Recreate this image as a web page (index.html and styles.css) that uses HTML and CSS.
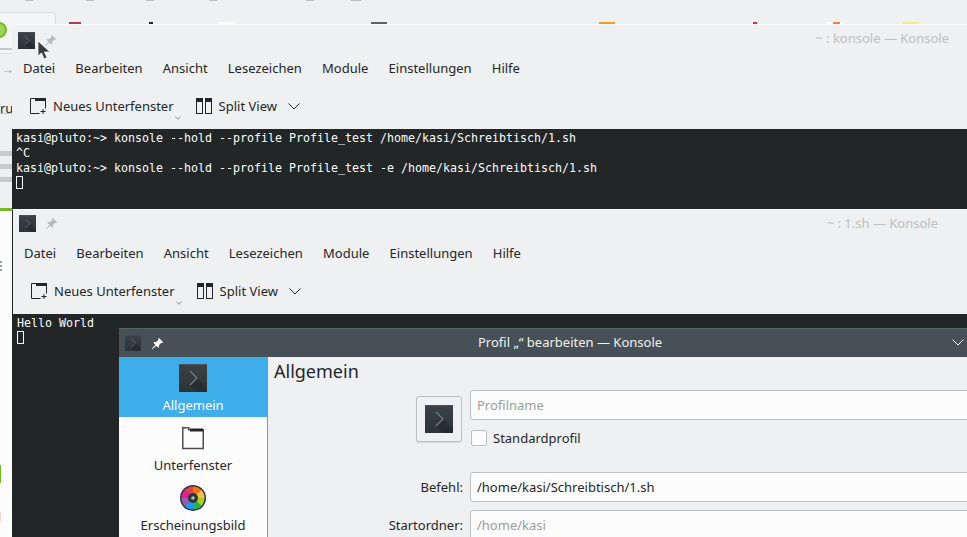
FILE: index.html
```html
<!DOCTYPE html>
<html lang="de">
<head>
    <meta charset="UTF-8">
    <meta name="viewport" content="width=device-width, initial-scale=1.0">
    <title>Konsole</title>
    <link rel="stylesheet" href="styles.css">
</head>
<body>
    <svg class="defs" width="0" height="0">
        <defs>
            <linearGradient id="konsole-bg" x1="0" y1="0" x2="0" y2="1">
                <stop offset="0" stop-color="#565c60"/>
                <stop offset="0.05" stop-color="#3b4144"/>
                <stop offset="1" stop-color="#2c3437"/>
            </linearGradient>
            <symbol id="konsole" viewBox="0 0 28 28">
                <rect width="28" height="28" fill="url(#konsole-bg)"/>
                <path d="M18 14l-7 7 7 7h10V24z" fill="#1f2426" opacity="0.45"/>
                <path d="M11 7l7 7-7 7" fill="none" stroke="#767c7f" stroke-width="1.200"/>
            </symbol>
            <symbol id="pin" viewBox="0 0 16 16">
                <path d="M9.500 1l5.500 5.500-1.500.8-.8-.3-3 3 .2 2.300-1 1-2.400-2.400L1.500 15l-.5-.5 4.400-5-2.400-2.400 1-1 2.300.2 3-3-.3-.8z" fill="currentColor"/>
            </symbol>
            <symbol id="new-tab" viewBox="0 0 16 16">
                <path d="M.5 15.500V.5h5v2h10v8" fill="none" stroke="#232629"/>
                <path d="M.5 15.500h9" fill="none" stroke="#232629"/>
                <rect x="5" y="0" width="11" height="3" fill="#232629"/>
                <path d="M13 11v5M10.500 13.500h5" fill="none" stroke="#232629"/>
            </symbol>
            <symbol id="split" viewBox="0 0 16 16">
                <rect x=".5" y=".5" width="6" height="15" fill="none" stroke="#232629"/>
                <rect x="9.500" y=".5" width="6" height="15" fill="none" stroke="#232629"/>
                <rect x="0" y="0" width="7" height="4" fill="#232629"/>
                <rect x="9" y="0" width="7" height="4" fill="#232629"/>
            </symbol>
            <symbol id="chevron" viewBox="0 0 12 7">
                <path d="M.5 .5L6 6l5.500-5.500" fill="none" stroke="currentColor"/>
            </symbol>
        </defs>
    </svg>

    <!-- whatever is left of the desktop behind the windows -->
    <div class="desktop">
        <div class="side-top">
            <span class="tick tick1"></span>
            <span class="tick tick2"></span>
            <span class="tick tick3"></span>
            <span class="tick tick4"></span>
            <span class="tick tick5"></span>
            <span class="tick tick6"></span>
            <div class="card"></div>
            <div class="green-dot"></div>
            <div class="side-rule rule1"></div>
            <div class="side-arrow">→</div>
            <div class="side-text">ru</div>
            <div class="side-rule rule2"></div>
        </div>
        <div class="stripe stripe1"></div>
        <div class="stripe stripe2"></div>
        <div class="stripe stripe3"></div>
        <div class="green-line"></div>
        <div class="side-dots"></div>
        <div class="green-bar"></div>
        <div class="pink-bar"></div>

        <span class="peek peek1"></span>
        <span class="peek peek2"></span>
        <span class="peek peek3"></span>
        <span class="peek peek4"></span>
        <span class="peek peek5"></span>
        <span class="peek peek6"></span>
        <span class="peek peek7"></span>
        <span class="peek peek8"></span>
    </div>

    <div class="window window-one">
        <div class="titlebar">
            <svg class="app-icon"><use href="#konsole"/></svg>
            <svg class="pin-icon"><use href="#pin"/></svg>
            <div class="window-title">~ : konsole — Konsole</div>
        </div>
        <div class="menubar">
            <span>Datei</span><span>Bearbeiten</span><span>Ansicht</span><span>Lesezeichen</span><span>Module</span><span>Einstellungen</span><span>Hilfe</span>
        </div>
        <div class="toolbar">
            <div class="tool">
                <svg class="tool-icon"><use href="#new-tab"/></svg>
                <span>Neues Unterfenster</span>
                <svg class="tiny-arrow"><use href="#chevron"/></svg>
            </div>
            <div class="tool tool-split">
                <svg class="tool-icon"><use href="#split"/></svg>
                <span>Split View</span>
                <svg class="tool-chevron"><use href="#chevron"/></svg>
            </div>
        </div>
        <pre class="terminal">kasi@pluto:~&gt; konsole --hold --profile Profile_test /home/kasi/Schreibtisch/1.sh
^C
kasi@pluto:~&gt; konsole --hold --profile Profile_test -e /home/kasi/Schreibtisch/1.sh
<span class="cursor"></span></pre>
    </div>

    <div class="window window-two">
        <div class="titlebar">
            <svg class="app-icon"><use href="#konsole"/></svg>
            <svg class="pin-icon"><use href="#pin"/></svg>
            <div class="window-title">~ : 1.sh — Konsole</div>
        </div>
        <div class="menubar">
            <span>Datei</span><span>Bearbeiten</span><span>Ansicht</span><span>Lesezeichen</span><span>Module</span><span>Einstellungen</span><span>Hilfe</span>
        </div>
        <div class="toolbar">
            <div class="tool">
                <svg class="tool-icon"><use href="#new-tab"/></svg>
                <span>Neues Unterfenster</span>
                <svg class="tiny-arrow"><use href="#chevron"/></svg>
            </div>
            <div class="tool tool-split">
                <svg class="tool-icon"><use href="#split"/></svg>
                <span>Split View</span>
                <svg class="tool-chevron"><use href="#chevron"/></svg>
            </div>
        </div>
        <pre class="terminal">Hello World
<span class="cursor"></span></pre>
    </div>

    <div class="dialog">
        <div class="dialog-titlebar">
            <svg class="dialog-app-icon"><use href="#konsole"/></svg>
            <svg class="dialog-pin"><use href="#pin"/></svg>
            <div class="dialog-title">Profil „“ bearbeiten — Konsole</div>
            <svg class="dialog-chevron"><use href="#chevron"/></svg>
        </div>
        <div class="dialog-body">
            <div class="sidebar">
                <div class="side-item active">
                    <svg class="side-icon"><use href="#konsole"/></svg>
                    <span>Allgemein</span>
                </div>
                <div class="side-item">
                    <svg class="side-icon" viewBox="0 0 28 28">
                        <path d="M3.750 24.500V3.750h6v2h14.500v18.750z" fill="#fcfcfc" stroke="#4d4d4d" stroke-width="1.500"/>
                        <rect x="11" y="4.500" width="13" height="3" fill="#232629"/>
                    </svg>
                    <span>Unterfenster</span>
                </div>
                <div class="side-item">
                    <svg class="side-icon" viewBox="0 0 28 28">
                        <defs>
                            <clipPath id="disc"><circle cx="14" cy="14" r="11.500"/></clipPath>
                        </defs>
                        <circle cx="14" cy="14" r="13" fill="#31363b"/>
                        <g clip-path="url(#disc)">
                            <path d="M14 14L14 0 28 0z" fill="#f67400"/>
                            <path d="M14 14L28 0 28 14z" fill="#fdbc4b"/>
                            <path d="M14 14L28 14 28 28z" fill="#a5d321"/>
                            <path d="M14 14L28 28 14 28z" fill="#27ae60"/>
                            <path d="M14 14L14 28 0 28z" fill="#1d99f3"/>
                            <path d="M14 14L0 28 0 14z" fill="#9b59b6"/>
                            <path d="M14 14L0 14 0 0z" fill="#e0218a"/>
                            <path d="M14 14L0 0 14 0z" fill="#da4453"/>
                        </g>
                        <circle cx="14" cy="14" r="5" fill="#31363b"/>
                        <circle cx="14" cy="14" r="1.800" fill="#b0b4b6"/>
                    </svg>
                    <span>Erscheinungsbild</span>
                </div>
            </div>
            <div class="page">
                <h1 class="page-title">Allgemein</h1>
                <div class="form">
                    <div class="icon-cell">
                        <button class="icon-button"><svg class="button-icon"><use href="#konsole"/></svg></button>
                    </div>
                    <div class="name-cell">
                        <div class="field placeholder">Profilname</div>
                        <label class="check-row"><span class="checkbox"></span>Standardprofil</label>
                    </div>
                    <div class="form-label">Befehl:</div>
                    <div class="field">/home/kasi/Schreibtisch/1.sh</div>
                    <div class="form-label">Startordner:</div>
                    <div class="field placeholder">/home/kasi</div>
                </div>
            </div>
        </div>
    </div>

    <!-- mouse pointer -->
    <svg class="pointer" width="14" height="21" viewBox="0 0 14 21">
        <path d="M1 1v15l3.500-3 2.500 6 3-1.300-2.500-5.700H13z" fill="#3a3a3a" stroke="#fff" stroke-width="0.800"/>
    </svg>
</body>
</html>
```

FILE: styles.css
```css
html, body {
    margin: 0;
    height: 537px;
    overflow: hidden;
}
body {
    position: relative;
    width: 967px;
    background: #fcfcfc;
    font-family: "Noto Sans", sans-serif;
    font-size: 13px;
    color: #232629;
}
.defs {
    position: absolute;
}

/* desktop leftovers */
.desktop {
    position: absolute;
    inset: 0;
}
.side-top {
    position: absolute;
    left: 0;
    top: 0;
    width: 967px;
    height: 209px;
    background: #eff0f1;
}
.tick {
    position: absolute;
    top: 0;
    height: 1px;
    width: 8px;
    background: #bdc0c3;
}
.tick1 { left: 25px; }
.tick2 { left: 86px; }
.tick3 { left: 146px; }
.tick4 { left: 209px; }
.tick5 { left: 306px; }
.tick6 { left: 351px; width: 10px; }
.card {
    position: absolute;
    left: -10px;
    top: 12px;
    width: 64px;
    height: 40px;
    background: #f4f5f6;
    border: 1px solid #d9dbdd;
    border-radius: 3px;
}
.green-dot {
    position: absolute;
    left: -9px;
    top: 22px;
    width: 12px;
    height: 12px;
    border: 2px solid #73ba25;
    border-radius: 50%;
    background: #9fd35c;
}
.side-rule {
    position: absolute;
    left: 0;
    width: 12px;
    height: 1px;
    background: #c5c8ca;
}
.rule1 { top: 48px; height: 2px; }
.rule2 { top: 113px; }
.side-arrow {
    position: absolute;
    left: 1px;
    top: 60px;
    color: #a5a8ab;
    font-size: 13px;
}
.side-text {
    position: absolute;
    left: 0;
    top: 99px;
    font-size: 13px;
}
.stripe {
    position: absolute;
    left: 0;
    width: 12px;
    height: 5px;
    background: #c8cbcd;
}
.stripe1 { top: 151px; }
.stripe2 { top: 164px; }
.stripe3 { top: 177px; }
.green-line {
    position: absolute;
    left: 0;
    top: 208px;
    width: 12px;
    height: 3px;
    background: #73ba25;
}
.side-dots {
    position: absolute;
    left: 0;
    top: 261px;
    width: 2px;
    height: 2px;
    background: #9a9da0;
    box-shadow: 0 4px #9a9da0, 0 8px #9a9da0;
}
.green-bar {
    position: absolute;
    left: 0;
    top: 465px;
    width: 1px;
    height: 18px;
    background: #73ba25;
}
.pink-bar {
    position: absolute;
    left: 0;
    top: 512px;
    width: 1px;
    height: 9px;
    background: #fbd5c5;
}
.peek {
    position: absolute;
    top: 22px;
    height: 2px;
    width: 16px;
}
.peek1 { left: 69px; width: 12px; background: #b03a55; }
.peek2 { left: 149px; width: 4px; background: #232629; }
.peek3 { left: 219px; background: #fff; }
.peek4 { left: 371px; background: #59636a; }
.peek5 { left: 599px; background: #f39c1f; }
.peek6 { left: 753px; width: 4px; background: #da2c43; }
.peek7 { left: 827px; background: linear-gradient(90deg, #fff 35%, #f0823c 35%, #f0823c 80%, #fff 80%); }
.peek8 { left: 903px; background: #f9e58c; }

/* konsole windows */
.window {
    position: absolute;
    display: flex;
    flex-direction: column;
    background: #eff0f1;
    border-top: 1px solid #fcfcfc;
}
.window-one {
    left: 12px;
    top: 24px;
    width: 955px;
    height: 184px;
}
.window-two {
    left: 12px;
    top: 209px;
    width: 954px;
    height: 327px;
    border-left: 1px solid #232627;
}
.titlebar {
    position: relative;
    display: flex;
    align-items: center;
    height: 30px;
    flex-shrink: 0;
    padding-left: 6px;
}
.window-two .titlebar {
    height: 27px;
}
.app-icon {
    width: 17px;
    height: 17px;
}
.pin-icon {
    width: 13px;
    height: 13px;
    margin-left: 9px;
    color: #b9bcbf;
}
.window-title {
    position: absolute;
    right: 18px;
    top: 5px;
    line-height: 17px;
    color: #bcc0c3;
}
.window-two .window-title {
    right: 29px;
}
.menubar {
    display: flex;
    gap: 20.200px;
    height: 26px;
    flex-shrink: 0;
    align-items: center;
    padding-left: 11px;
    line-height: 18px;
}
.window-two .menubar {
    height: 32px;
}
.toolbar {
    display: flex;
    align-items: center;
    height: 48px;
    flex-shrink: 0;
    box-sizing: border-box;
    padding: 2px 0 0 18px;
}
.window-two .toolbar {
    height: 45px;
    padding: 0 0 2px 18px;
}
.tool {
    position: relative;
    display: flex;
    align-items: center;
    gap: 7px;
}
.tool-split {
    margin-left: 22px;
}
.tool-chevron {
    width: 12px;
    height: 7px;
    margin: 1px 0 0 4px;
    color: #232629;
}
.tool-icon {
    width: 16px;
    height: 16px;
}
.tiny-arrow {
    position: absolute;
    right: -7px;
    bottom: -5px;
    width: 6px;
    height: 4px;
    color: #232629;
}
.terminal {
    flex: 1;
    margin: 0;
    padding: 2px 4px 0;
    background: #232627;
    color: #fcfcfc;
    font-family: "DejaVu Sans Mono", monospace;
    font-size: 11.640px;
    line-height: 15px;
    overflow: hidden;
}
.cursor {
    display: inline-block;
    width: 5px;
    height: 11px;
    border: 1px solid #fcfcfc;
    vertical-align: -2px;
}

/* profile dialog */
.dialog {
    position: absolute;
    left: 119px;
    top: 328px;
    width: 860px;
    height: 209px;
    overflow: hidden;
    background: #eff0f1;
}
.dialog-titlebar {
    position: relative;
    display: flex;
    align-items: center;
    height: 28px;
    padding-left: 6px;
    border-top: 1px solid #5b656c;
    background: #475057;
    color: #fcfcfc;
}
.dialog-app-icon {
    width: 16px;
    height: 16px;
}
.dialog-pin {
    width: 13px;
    height: 13px;
    margin-left: 10px;
    color: #fcfcfc;
}
.dialog-title {
    position: absolute;
    left: 359px;
    top: 4px;
    line-height: 18px;
    color: #eff0f1;
}
.dialog-chevron {
    position: absolute;
    left: 833px;
    top: 10px;
    width: 12px;
    height: 7px;
}
.dialog-body {
    display: flex;
    height: 180px;
}
.sidebar {
    width: 148px;
    flex-shrink: 0;
    background: #fcfcfc;
    border-right: 1px solid #3daee9;
}
.side-item {
    display: flex;
    flex-direction: column;
    align-items: center;
    height: 60px;
    padding-top: 7px;
    box-sizing: border-box;
    line-height: 18px;
    gap: 4px;
}
.side-item.active {
    background: #3daee9;
    color: #fcfcfc;
}
.side-icon {
    width: 28px;
    height: 28px;
    flex-shrink: 0;
}
.page {
    flex: 1;
    padding-left: 6px;
}
.page-title {
    margin: 0;
    font-size: 18px;
    font-weight: 400;
    line-height: 24px;
    height: 33px;
    padding-top: 2px;
    box-sizing: border-box;
    color: #232629;
}
.form {
    display: grid;
    grid-template-columns: 189px 1fr;
    column-gap: 7px;
    row-gap: 8px;
}
.icon-cell {
    display: flex;
    justify-content: flex-end;
    padding-top: 6px;
}
.icon-button {
    display: flex;
    align-items: center;
    justify-content: center;
    width: 46px;
    height: 46px;
    padding: 0;
    margin-right: 1px;
    background: #eff0f1;
    border: 1px solid #bcbebf;
    border-radius: 3px;
    box-shadow: 0 1px 1px rgba(0,0,0,0.1);
}
.button-icon {
    width: 28px;
    height: 28px;
}
.name-cell {
    display: flex;
    flex-direction: column;
    gap: 9px;
    padding-bottom: 17px;
}
.field {
    height: 30px;
    box-sizing: border-box;
    padding: 0 6px;
    background: #fcfcfc;
    border: 1px solid #bcbebf;
    border-radius: 3px;
    line-height: 28px;
}
.placeholder {
    color: #9a9c9e;
}
.check-row {
    display: flex;
    align-items: center;
    gap: 6px;
    padding-left: 1px;
    height: 18px;
    line-height: 18px;
}
.checkbox {
    width: 14px;
    height: 14px;
    background: #fcfcfc;
    border: 1px solid #bcbebf;
    border-radius: 2px;
}
.form-label {
    text-align: right;
    line-height: 30px;
}

.pointer {
    position: absolute;
    left: 37px;
    top: 40px;
}
```
